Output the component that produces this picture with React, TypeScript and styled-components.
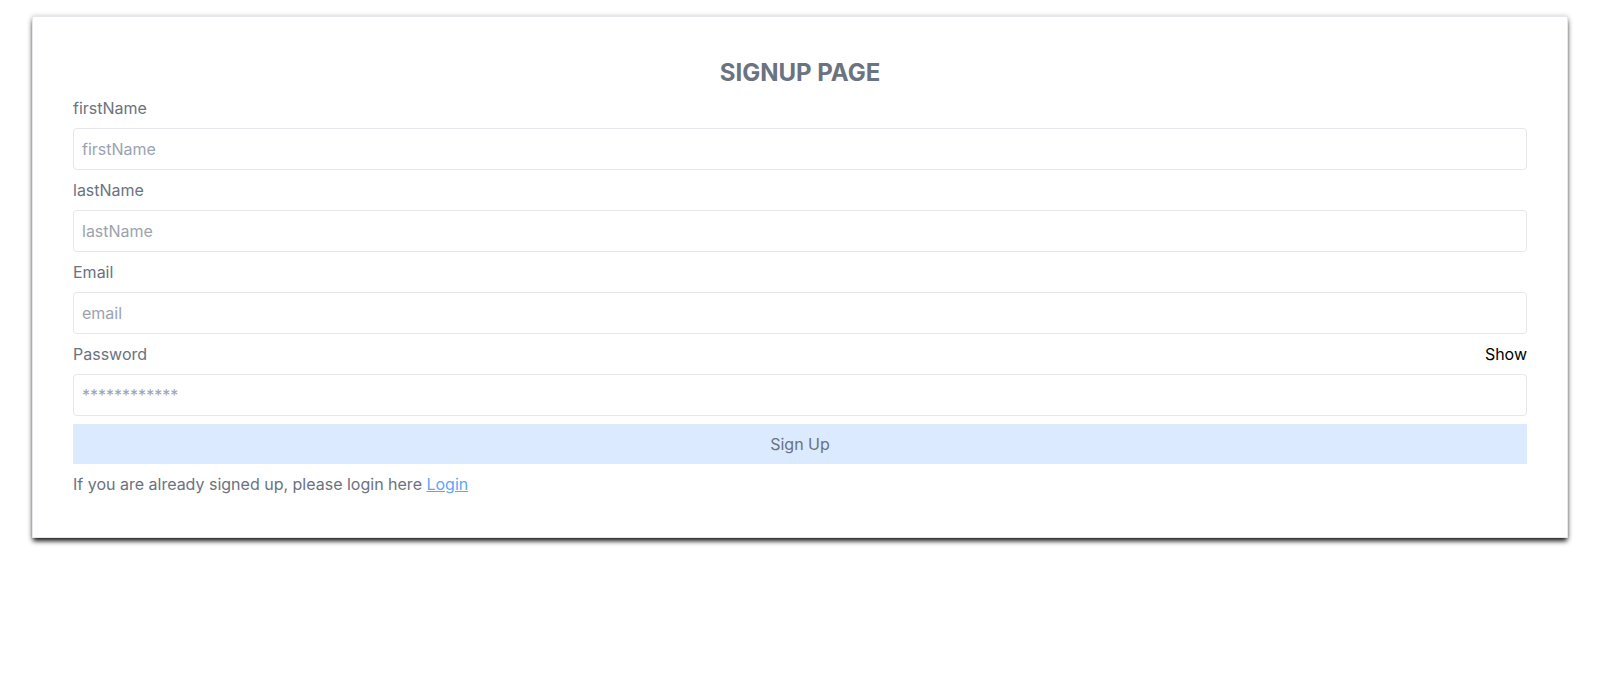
import React, { useState } from 'react';
import styled, { createGlobalStyle } from 'styled-components';

const GlobalStyle = createGlobalStyle`
  body {
    margin: 0;
    background: #ffffff;
    font-family: Inter, "Noto Sans", "Liberation Sans", sans-serif;
  }
  * {
    box-sizing: border-box;
  }
`;

const Page = styled.div`
  padding: 16px 32px;
`;

const Card = styled.form`
  border: 1px solid #e5e7eb;
  background: #ffffff;
  padding: 40px 40px 41px;
  box-shadow: 0 4px 5px -1px rgba(0, 0, 0, 0.9), 0 0 5px rgba(0, 0, 0, 0.2);
`;

const Title = styled.h1`
  margin: 0 0 7px;
  text-align: center;
  font-size: 24px;
  line-height: 32px;
  font-weight: 700;
  color: #6b7280;
`;

const Field = styled.div`
  display: flex;
  flex-direction: column;
  gap: 8px;
  margin-bottom: 8px;
`;

const LabelRow = styled.div`
  display: flex;
  justify-content: space-between;
  align-items: center;
`;

const Label = styled.label`
  font-size: 16px;
  line-height: 24px;
  color: #6b7280;
`;

const Toggle = styled.span`
  font-size: 16px;
  line-height: 24px;
  color: #000000;
  cursor: pointer;
`;

const Input = styled.input`
  width: 100%;
  height: 42px;
  padding: 0 8px;
  border: 1px solid #e5e7eb;
  border-radius: 4px;
  font-family: inherit;
  font-size: 16px;
  color: #374151;
  outline: none;

  &::placeholder {
    color: #9ca3af;
  }
`;

const Submit = styled.button`
  display: block;
  width: 100%;
  height: 40px;
  border: none;
  background: #dbeafe;
  color: #6b7280;
  font-family: inherit;
  font-size: 16px;
  cursor: pointer;
`;

const Footer = styled.p`
  margin: 8px 0 0;
  font-size: 16px;
  line-height: 24px;
  color: #6b7280;

  a {
    color: #60a5fa;
    text-decoration: underline;
  }
`;

const fields = [
  { name: 'firstName', label: 'firstName', placeholder: 'firstName', type: 'text' },
  { name: 'lastName', label: 'lastName', placeholder: 'lastName', type: 'text' },
  { name: 'email', label: 'Email', placeholder: 'email', type: 'email' },
];

const App: React.FC = () => {
  const [show, setShow] = useState(false);

  return (
    <Page>
      <GlobalStyle />
      <Card onSubmit={(e) => e.preventDefault()}>
        <Title>SIGNUP PAGE</Title>
        {fields.map((f) => (
          <Field key={f.name}>
            <Label htmlFor={f.name}>{f.label}</Label>
            <Input id={f.name} name={f.name} type={f.type} placeholder={f.placeholder} />
          </Field>
        ))}
        <Field>
          <LabelRow>
            <Label htmlFor="password">Password</Label>
            <Toggle onClick={() => setShow(!show)}>{show ? 'Hide' : 'Show'}</Toggle>
          </LabelRow>
          <Input
            id="password"
            name="password"
            type={show ? 'text' : 'password'}
            placeholder="************"
          />
        </Field>
        <Submit type="submit">Sign Up</Submit>
        <Footer>
          If you are already signed up, please login here <a href="#login">Login</a>
        </Footer>
      </Card>
    </Page>
  );
};

export default App;
